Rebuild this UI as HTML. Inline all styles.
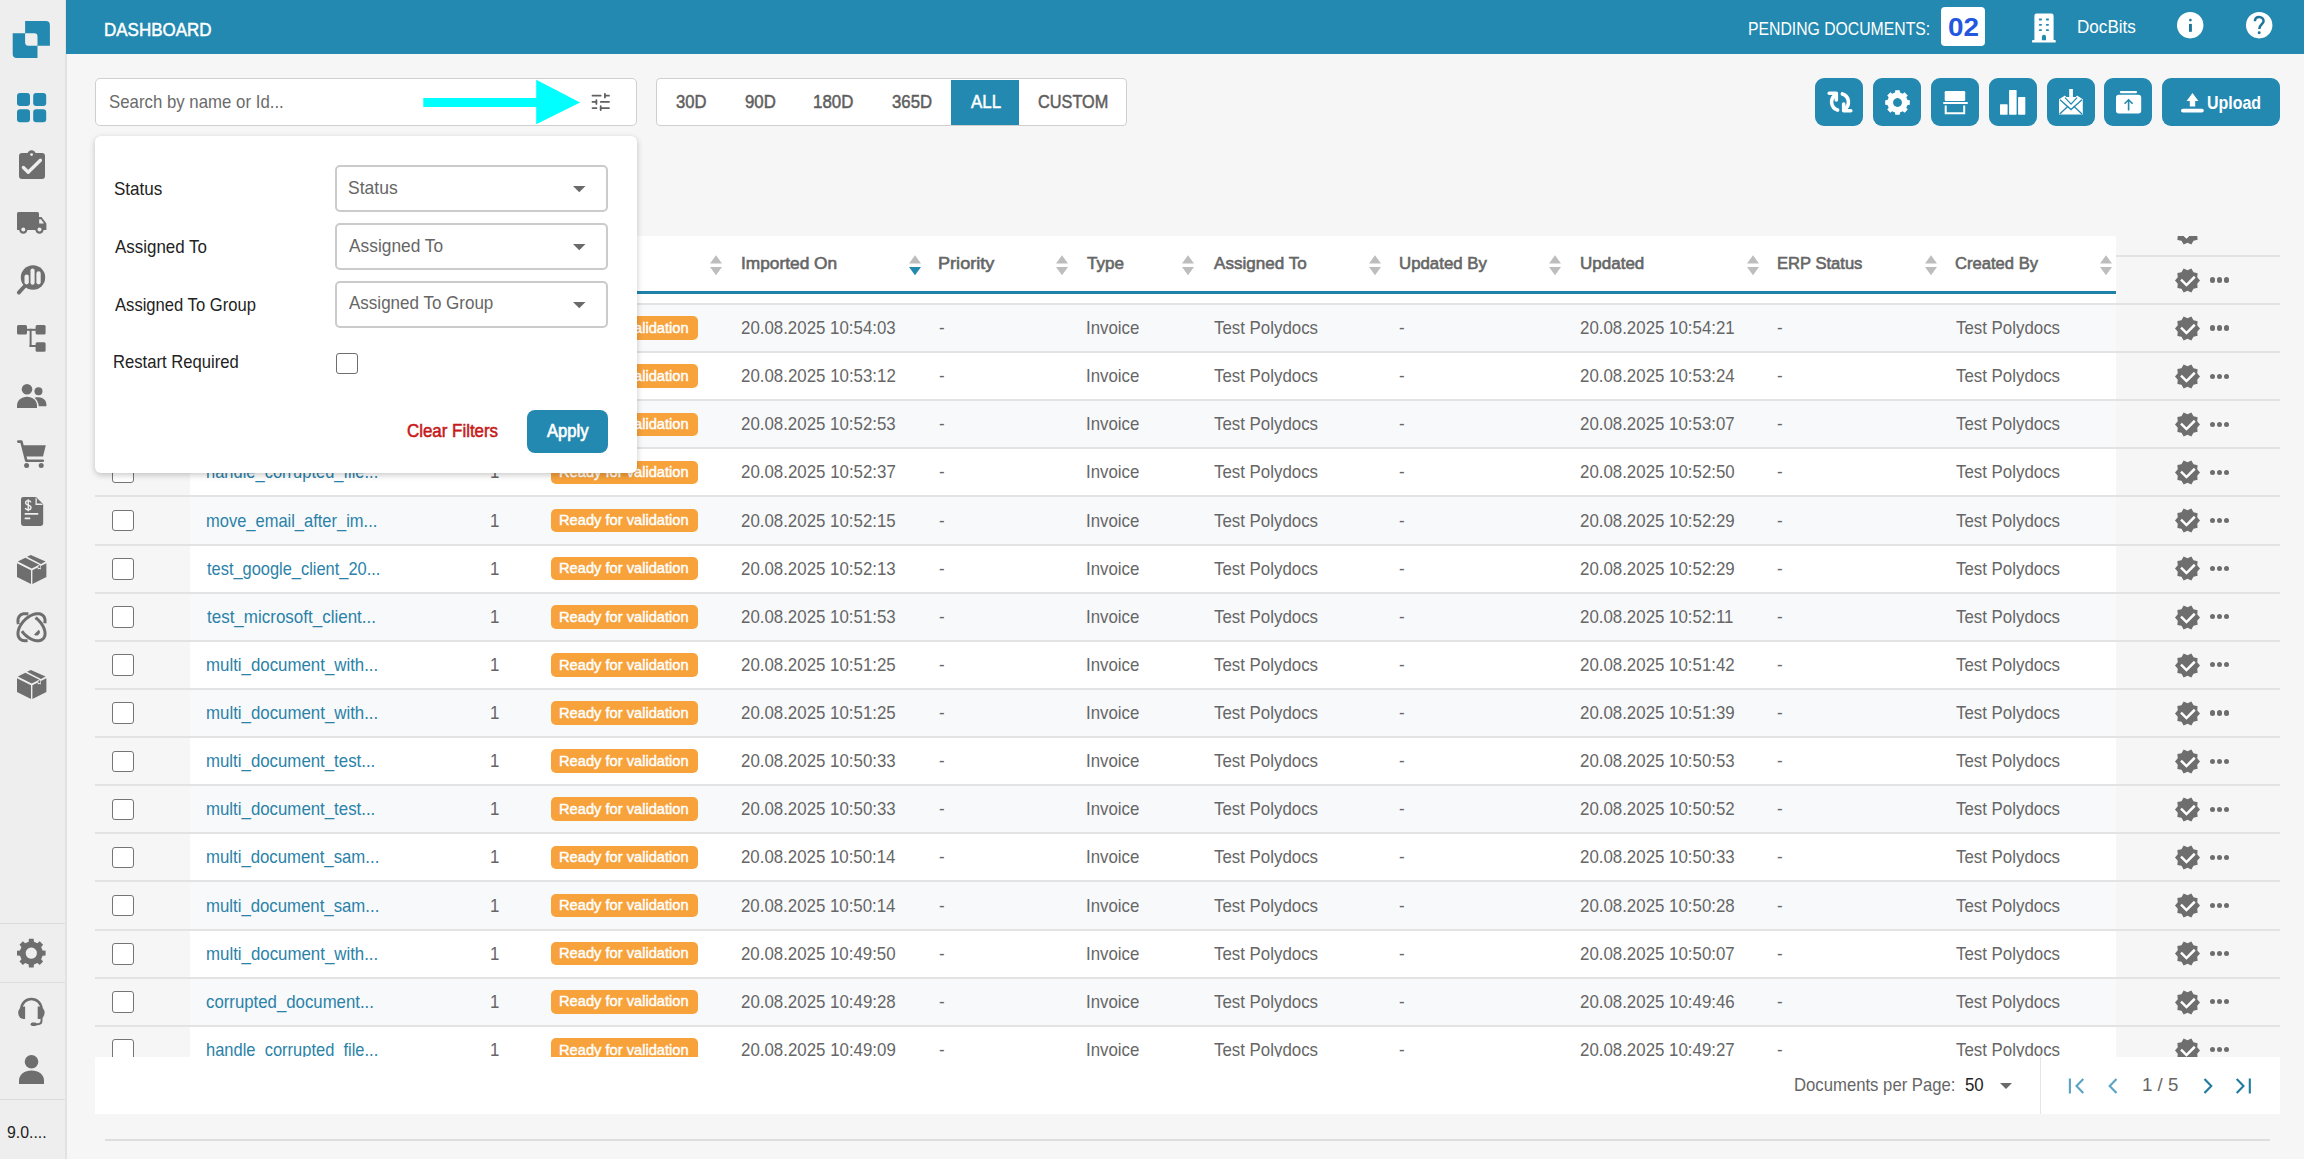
<!DOCTYPE html><html><head><meta charset="utf-8"><style>
*{margin:0;padding:0;box-sizing:border-box}
html,body{width:2304px;height:1159px;overflow:hidden;background:#f6f6f6;font-family:"Liberation Sans",sans-serif}
.a{position:absolute}
.t{position:absolute;white-space:nowrap;line-height:1;transform-origin:0 0}
svg{position:absolute;overflow:visible}
</style></head><body>
<div class="a" style="left:0;top:0;width:2304px;height:1159px;overflow:hidden;clip-path:inset(236px 0 102px 0)">
<div class="a" style="left:190.00px;top:207.76px;width:1926.00px;height:48.12px;background:#f8f9fb;"></div>
<div class="a" style="left:95.00px;top:207.76px;width:95.00px;height:48.12px;background:#f6f6f6;"></div>
<div class="a" style="left:2116.00px;top:207.76px;width:164.00px;height:48.12px;background:#f6f6f6;"></div>
<div class="a" style="left:190.00px;top:255.88px;width:1926.00px;height:48.12px;background:#ffffff;"></div>
<div class="a" style="left:95.00px;top:255.88px;width:95.00px;height:48.12px;background:#f6f6f6;"></div>
<div class="a" style="left:2116.00px;top:255.88px;width:164.00px;height:48.12px;background:#f6f6f6;"></div>
<div class="a" style="left:190.00px;top:304.00px;width:1926.00px;height:48.12px;background:#f8f9fb;"></div>
<div class="a" style="left:95.00px;top:304.00px;width:95.00px;height:48.12px;background:#f6f6f6;"></div>
<div class="a" style="left:2116.00px;top:304.00px;width:164.00px;height:48.12px;background:#f6f6f6;"></div>
<div class="a" style="left:190.00px;top:352.12px;width:1926.00px;height:48.12px;background:#ffffff;"></div>
<div class="a" style="left:95.00px;top:352.12px;width:95.00px;height:48.12px;background:#f6f6f6;"></div>
<div class="a" style="left:2116.00px;top:352.12px;width:164.00px;height:48.12px;background:#f6f6f6;"></div>
<div class="a" style="left:190.00px;top:400.24px;width:1926.00px;height:48.12px;background:#f8f9fb;"></div>
<div class="a" style="left:95.00px;top:400.24px;width:95.00px;height:48.12px;background:#f6f6f6;"></div>
<div class="a" style="left:2116.00px;top:400.24px;width:164.00px;height:48.12px;background:#f6f6f6;"></div>
<div class="a" style="left:190.00px;top:448.36px;width:1926.00px;height:48.12px;background:#ffffff;"></div>
<div class="a" style="left:95.00px;top:448.36px;width:95.00px;height:48.12px;background:#f6f6f6;"></div>
<div class="a" style="left:2116.00px;top:448.36px;width:164.00px;height:48.12px;background:#f6f6f6;"></div>
<div class="a" style="left:190.00px;top:496.48px;width:1926.00px;height:48.12px;background:#f8f9fb;"></div>
<div class="a" style="left:95.00px;top:496.48px;width:95.00px;height:48.12px;background:#f6f6f6;"></div>
<div class="a" style="left:2116.00px;top:496.48px;width:164.00px;height:48.12px;background:#f6f6f6;"></div>
<div class="a" style="left:190.00px;top:544.60px;width:1926.00px;height:48.12px;background:#ffffff;"></div>
<div class="a" style="left:95.00px;top:544.60px;width:95.00px;height:48.12px;background:#f6f6f6;"></div>
<div class="a" style="left:2116.00px;top:544.60px;width:164.00px;height:48.12px;background:#f6f6f6;"></div>
<div class="a" style="left:190.00px;top:592.72px;width:1926.00px;height:48.12px;background:#f8f9fb;"></div>
<div class="a" style="left:95.00px;top:592.72px;width:95.00px;height:48.12px;background:#f6f6f6;"></div>
<div class="a" style="left:2116.00px;top:592.72px;width:164.00px;height:48.12px;background:#f6f6f6;"></div>
<div class="a" style="left:190.00px;top:640.84px;width:1926.00px;height:48.12px;background:#ffffff;"></div>
<div class="a" style="left:95.00px;top:640.84px;width:95.00px;height:48.12px;background:#f6f6f6;"></div>
<div class="a" style="left:2116.00px;top:640.84px;width:164.00px;height:48.12px;background:#f6f6f6;"></div>
<div class="a" style="left:190.00px;top:688.96px;width:1926.00px;height:48.12px;background:#f8f9fb;"></div>
<div class="a" style="left:95.00px;top:688.96px;width:95.00px;height:48.12px;background:#f6f6f6;"></div>
<div class="a" style="left:2116.00px;top:688.96px;width:164.00px;height:48.12px;background:#f6f6f6;"></div>
<div class="a" style="left:190.00px;top:737.08px;width:1926.00px;height:48.12px;background:#ffffff;"></div>
<div class="a" style="left:95.00px;top:737.08px;width:95.00px;height:48.12px;background:#f6f6f6;"></div>
<div class="a" style="left:2116.00px;top:737.08px;width:164.00px;height:48.12px;background:#f6f6f6;"></div>
<div class="a" style="left:190.00px;top:785.20px;width:1926.00px;height:48.12px;background:#f8f9fb;"></div>
<div class="a" style="left:95.00px;top:785.20px;width:95.00px;height:48.12px;background:#f6f6f6;"></div>
<div class="a" style="left:2116.00px;top:785.20px;width:164.00px;height:48.12px;background:#f6f6f6;"></div>
<div class="a" style="left:190.00px;top:833.32px;width:1926.00px;height:48.12px;background:#ffffff;"></div>
<div class="a" style="left:95.00px;top:833.32px;width:95.00px;height:48.12px;background:#f6f6f6;"></div>
<div class="a" style="left:2116.00px;top:833.32px;width:164.00px;height:48.12px;background:#f6f6f6;"></div>
<div class="a" style="left:190.00px;top:881.44px;width:1926.00px;height:48.12px;background:#f8f9fb;"></div>
<div class="a" style="left:95.00px;top:881.44px;width:95.00px;height:48.12px;background:#f6f6f6;"></div>
<div class="a" style="left:2116.00px;top:881.44px;width:164.00px;height:48.12px;background:#f6f6f6;"></div>
<div class="a" style="left:190.00px;top:929.56px;width:1926.00px;height:48.12px;background:#ffffff;"></div>
<div class="a" style="left:95.00px;top:929.56px;width:95.00px;height:48.12px;background:#f6f6f6;"></div>
<div class="a" style="left:2116.00px;top:929.56px;width:164.00px;height:48.12px;background:#f6f6f6;"></div>
<div class="a" style="left:190.00px;top:977.68px;width:1926.00px;height:48.12px;background:#f8f9fb;"></div>
<div class="a" style="left:95.00px;top:977.68px;width:95.00px;height:48.12px;background:#f6f6f6;"></div>
<div class="a" style="left:2116.00px;top:977.68px;width:164.00px;height:48.12px;background:#f6f6f6;"></div>
<div class="a" style="left:190.00px;top:1025.80px;width:1926.00px;height:48.12px;background:#ffffff;"></div>
<div class="a" style="left:95.00px;top:1025.80px;width:95.00px;height:48.12px;background:#f6f6f6;"></div>
<div class="a" style="left:2116.00px;top:1025.80px;width:164.00px;height:48.12px;background:#f6f6f6;"></div>
<div class="a" style="left:95.00px;top:255.00px;width:2185.00px;height:2.00px;background:#e3e3e3;"></div>
<div class="a" style="left:95.00px;top:303.00px;width:2185.00px;height:2.00px;background:#e3e3e3;"></div>
<div class="a" style="left:95.00px;top:351.00px;width:2185.00px;height:2.00px;background:#e3e3e3;"></div>
<div class="a" style="left:95.00px;top:399.00px;width:2185.00px;height:2.00px;background:#e3e3e3;"></div>
<div class="a" style="left:95.00px;top:447.00px;width:2185.00px;height:2.00px;background:#e3e3e3;"></div>
<div class="a" style="left:95.00px;top:495.00px;width:2185.00px;height:2.00px;background:#e3e3e3;"></div>
<div class="a" style="left:95.00px;top:544.00px;width:2185.00px;height:2.00px;background:#e3e3e3;"></div>
<div class="a" style="left:95.00px;top:592.00px;width:2185.00px;height:2.00px;background:#e3e3e3;"></div>
<div class="a" style="left:95.00px;top:640.00px;width:2185.00px;height:2.00px;background:#e3e3e3;"></div>
<div class="a" style="left:95.00px;top:688.00px;width:2185.00px;height:2.00px;background:#e3e3e3;"></div>
<div class="a" style="left:95.00px;top:736.00px;width:2185.00px;height:2.00px;background:#e3e3e3;"></div>
<div class="a" style="left:95.00px;top:784.00px;width:2185.00px;height:2.00px;background:#e3e3e3;"></div>
<div class="a" style="left:95.00px;top:832.00px;width:2185.00px;height:2.00px;background:#e3e3e3;"></div>
<div class="a" style="left:95.00px;top:880.00px;width:2185.00px;height:2.00px;background:#e3e3e3;"></div>
<div class="a" style="left:95.00px;top:929.00px;width:2185.00px;height:2.00px;background:#e3e3e3;"></div>
<div class="a" style="left:95.00px;top:977.00px;width:2185.00px;height:2.00px;background:#e3e3e3;"></div>
<div class="a" style="left:95.00px;top:1025.00px;width:2185.00px;height:2.00px;background:#e3e3e3;"></div>
<div class="a" style="left:95.00px;top:1073.00px;width:2185.00px;height:2.00px;background:#e3e3e3;"></div>
<div class="a" style="left:112px;top:317.46px;width:22px;height:21.5px;border:1.6px solid #757575;border-radius:3px;background:#fff"></div>
<div class="t" style="left:205.84px;top:320.07px;font-size:17.7px;color:#2a82a8;transform:scaleX(0.9319);">handle_corrupted_file...</div>
<div class="t" style="left:489.99px;top:320.07px;font-size:17.7px;color:#666;transform:scaleX(0.9532);">1</div>
<div class="a" style="left:550.6px;top:316.26px;width:147px;height:23.6px;background:#f7a23b;border-radius:5px"></div>
<div class="t" style="left:559.07px;top:320.79px;font-size:14.6px;color:#ffffff;-webkit-text-stroke:0.45px #ffffff;transform:scaleX(1.0051);">Ready for validation</div>
<div class="t" style="left:740.87px;top:320.07px;font-size:17.7px;color:#666;transform:scaleX(0.9532);">20.08.2025 10:54:03</div>
<div class="t" style="left:939.29px;top:320.07px;font-size:17.7px;color:#666;transform:scaleX(0.9532);">-</div>
<div class="t" style="left:1085.75px;top:320.07px;font-size:17.7px;color:#666;transform:scaleX(0.9532);">Invoice</div>
<div class="t" style="left:1213.54px;top:320.07px;font-size:17.7px;color:#666;transform:scaleX(0.9532);">Test Polydocs</div>
<div class="t" style="left:1399.29px;top:320.07px;font-size:17.7px;color:#666;transform:scaleX(0.9532);">-</div>
<div class="t" style="left:1580.17px;top:320.07px;font-size:17.7px;color:#666;transform:scaleX(0.9532);">20.08.2025 10:54:21</div>
<div class="t" style="left:1777.29px;top:320.07px;font-size:17.7px;color:#666;transform:scaleX(0.9532);">-</div>
<div class="t" style="left:1955.64px;top:320.07px;font-size:17.7px;color:#666;transform:scaleX(0.9532);">Test Polydocs</div>
<div class="a" style="left:112px;top:365.58px;width:22px;height:21.5px;border:1.6px solid #757575;border-radius:3px;background:#fff"></div>
<div class="t" style="left:205.93px;top:368.19px;font-size:17.7px;color:#2a82a8;transform:scaleX(0.9521);">multi_document_with...</div>
<div class="t" style="left:489.99px;top:368.19px;font-size:17.7px;color:#666;transform:scaleX(0.9532);">1</div>
<div class="a" style="left:550.6px;top:364.38px;width:147px;height:23.6px;background:#f7a23b;border-radius:5px"></div>
<div class="t" style="left:559.07px;top:368.91px;font-size:14.6px;color:#ffffff;-webkit-text-stroke:0.45px #ffffff;transform:scaleX(1.0051);">Ready for validation</div>
<div class="t" style="left:740.87px;top:368.19px;font-size:17.7px;color:#666;transform:scaleX(0.9539);">20.08.2025 10:53:12</div>
<div class="t" style="left:939.29px;top:368.19px;font-size:17.7px;color:#666;transform:scaleX(0.9532);">-</div>
<div class="t" style="left:1085.75px;top:368.19px;font-size:17.7px;color:#666;transform:scaleX(0.9532);">Invoice</div>
<div class="t" style="left:1213.54px;top:368.19px;font-size:17.7px;color:#666;transform:scaleX(0.9532);">Test Polydocs</div>
<div class="t" style="left:1399.29px;top:368.19px;font-size:17.7px;color:#666;transform:scaleX(0.9532);">-</div>
<div class="t" style="left:1580.17px;top:368.19px;font-size:17.7px;color:#666;transform:scaleX(0.9532);">20.08.2025 10:53:24</div>
<div class="t" style="left:1777.29px;top:368.19px;font-size:17.7px;color:#666;transform:scaleX(0.9532);">-</div>
<div class="t" style="left:1955.64px;top:368.19px;font-size:17.7px;color:#666;transform:scaleX(0.9532);">Test Polydocs</div>
<div class="a" style="left:112px;top:413.70px;width:22px;height:21.5px;border:1.6px solid #757575;border-radius:3px;background:#fff"></div>
<div class="t" style="left:205.93px;top:416.31px;font-size:17.7px;color:#2a82a8;transform:scaleX(0.9521);">multi_document_with...</div>
<div class="t" style="left:489.99px;top:416.31px;font-size:17.7px;color:#666;transform:scaleX(0.9532);">1</div>
<div class="a" style="left:550.6px;top:412.50px;width:147px;height:23.6px;background:#f7a23b;border-radius:5px"></div>
<div class="t" style="left:559.07px;top:417.03px;font-size:14.6px;color:#ffffff;-webkit-text-stroke:0.45px #ffffff;transform:scaleX(1.0051);">Ready for validation</div>
<div class="t" style="left:740.87px;top:416.31px;font-size:17.7px;color:#666;transform:scaleX(0.9532);">20.08.2025 10:52:53</div>
<div class="t" style="left:939.29px;top:416.31px;font-size:17.7px;color:#666;transform:scaleX(0.9532);">-</div>
<div class="t" style="left:1085.75px;top:416.31px;font-size:17.7px;color:#666;transform:scaleX(0.9532);">Invoice</div>
<div class="t" style="left:1213.54px;top:416.31px;font-size:17.7px;color:#666;transform:scaleX(0.9532);">Test Polydocs</div>
<div class="t" style="left:1399.29px;top:416.31px;font-size:17.7px;color:#666;transform:scaleX(0.9532);">-</div>
<div class="t" style="left:1580.17px;top:416.31px;font-size:17.7px;color:#666;transform:scaleX(0.9532);">20.08.2025 10:53:07</div>
<div class="t" style="left:1777.29px;top:416.31px;font-size:17.7px;color:#666;transform:scaleX(0.9532);">-</div>
<div class="t" style="left:1955.64px;top:416.31px;font-size:17.7px;color:#666;transform:scaleX(0.9532);">Test Polydocs</div>
<div class="a" style="left:112px;top:461.82px;width:22px;height:21.5px;border:1.6px solid #757575;border-radius:3px;background:#fff"></div>
<div class="t" style="left:205.84px;top:464.43px;font-size:17.7px;color:#2a82a8;transform:scaleX(0.9319);">handle_corrupted_file...</div>
<div class="t" style="left:489.99px;top:464.43px;font-size:17.7px;color:#666;transform:scaleX(0.9532);">1</div>
<div class="a" style="left:550.6px;top:460.62px;width:147px;height:23.6px;background:#f7a23b;border-radius:5px"></div>
<div class="t" style="left:559.07px;top:465.15px;font-size:14.6px;color:#ffffff;-webkit-text-stroke:0.45px #ffffff;transform:scaleX(1.0051);">Ready for validation</div>
<div class="t" style="left:740.87px;top:464.43px;font-size:17.7px;color:#666;transform:scaleX(0.9539);">20.08.2025 10:52:37</div>
<div class="t" style="left:939.29px;top:464.43px;font-size:17.7px;color:#666;transform:scaleX(0.9532);">-</div>
<div class="t" style="left:1085.75px;top:464.43px;font-size:17.7px;color:#666;transform:scaleX(0.9532);">Invoice</div>
<div class="t" style="left:1213.54px;top:464.43px;font-size:17.7px;color:#666;transform:scaleX(0.9532);">Test Polydocs</div>
<div class="t" style="left:1399.29px;top:464.43px;font-size:17.7px;color:#666;transform:scaleX(0.9532);">-</div>
<div class="t" style="left:1580.17px;top:464.43px;font-size:17.7px;color:#666;transform:scaleX(0.9532);">20.08.2025 10:52:50</div>
<div class="t" style="left:1777.29px;top:464.43px;font-size:17.7px;color:#666;transform:scaleX(0.9532);">-</div>
<div class="t" style="left:1955.64px;top:464.43px;font-size:17.7px;color:#666;transform:scaleX(0.9532);">Test Polydocs</div>
<div class="a" style="left:112px;top:509.94px;width:22px;height:21.5px;border:1.6px solid #757575;border-radius:3px;background:#fff"></div>
<div class="t" style="left:205.95px;top:512.55px;font-size:17.7px;color:#2a82a8;transform:scaleX(0.9320);">move_email_after_im...</div>
<div class="t" style="left:489.99px;top:512.55px;font-size:17.7px;color:#666;transform:scaleX(0.9532);">1</div>
<div class="a" style="left:550.6px;top:508.74px;width:147px;height:23.6px;background:#f7a23b;border-radius:5px"></div>
<div class="t" style="left:559.07px;top:513.27px;font-size:14.6px;color:#ffffff;-webkit-text-stroke:0.45px #ffffff;transform:scaleX(1.0051);">Ready for validation</div>
<div class="t" style="left:740.87px;top:512.55px;font-size:17.7px;color:#666;transform:scaleX(0.9532);">20.08.2025 10:52:15</div>
<div class="t" style="left:939.29px;top:512.55px;font-size:17.7px;color:#666;transform:scaleX(0.9532);">-</div>
<div class="t" style="left:1085.75px;top:512.55px;font-size:17.7px;color:#666;transform:scaleX(0.9532);">Invoice</div>
<div class="t" style="left:1213.54px;top:512.55px;font-size:17.7px;color:#666;transform:scaleX(0.9532);">Test Polydocs</div>
<div class="t" style="left:1399.29px;top:512.55px;font-size:17.7px;color:#666;transform:scaleX(0.9532);">-</div>
<div class="t" style="left:1580.17px;top:512.55px;font-size:17.7px;color:#666;transform:scaleX(0.9532);">20.08.2025 10:52:29</div>
<div class="t" style="left:1777.29px;top:512.55px;font-size:17.7px;color:#666;transform:scaleX(0.9532);">-</div>
<div class="t" style="left:1955.64px;top:512.55px;font-size:17.7px;color:#666;transform:scaleX(0.9532);">Test Polydocs</div>
<div class="a" style="left:112px;top:558.06px;width:22px;height:21.5px;border:1.6px solid #757575;border-radius:3px;background:#fff"></div>
<div class="t" style="left:206.77px;top:560.67px;font-size:17.7px;color:#2a82a8;transform:scaleX(0.9276);">test_google_client_20...</div>
<div class="t" style="left:489.99px;top:560.67px;font-size:17.7px;color:#666;transform:scaleX(0.9532);">1</div>
<div class="a" style="left:550.6px;top:556.86px;width:147px;height:23.6px;background:#f7a23b;border-radius:5px"></div>
<div class="t" style="left:559.07px;top:561.39px;font-size:14.6px;color:#ffffff;-webkit-text-stroke:0.45px #ffffff;transform:scaleX(1.0051);">Ready for validation</div>
<div class="t" style="left:740.87px;top:560.67px;font-size:17.7px;color:#666;transform:scaleX(0.9532);">20.08.2025 10:52:13</div>
<div class="t" style="left:939.29px;top:560.67px;font-size:17.7px;color:#666;transform:scaleX(0.9532);">-</div>
<div class="t" style="left:1085.75px;top:560.67px;font-size:17.7px;color:#666;transform:scaleX(0.9532);">Invoice</div>
<div class="t" style="left:1213.54px;top:560.67px;font-size:17.7px;color:#666;transform:scaleX(0.9532);">Test Polydocs</div>
<div class="t" style="left:1399.29px;top:560.67px;font-size:17.7px;color:#666;transform:scaleX(0.9532);">-</div>
<div class="t" style="left:1580.17px;top:560.67px;font-size:17.7px;color:#666;transform:scaleX(0.9532);">20.08.2025 10:52:29</div>
<div class="t" style="left:1777.29px;top:560.67px;font-size:17.7px;color:#666;transform:scaleX(0.9532);">-</div>
<div class="t" style="left:1955.64px;top:560.67px;font-size:17.7px;color:#666;transform:scaleX(0.9532);">Test Polydocs</div>
<div class="a" style="left:112px;top:606.18px;width:22px;height:21.5px;border:1.6px solid #757575;border-radius:3px;background:#fff"></div>
<div class="t" style="left:206.76px;top:608.79px;font-size:17.7px;color:#2a82a8;transform:scaleX(0.9602);">test_microsoft_client...</div>
<div class="t" style="left:489.99px;top:608.79px;font-size:17.7px;color:#666;transform:scaleX(0.9532);">1</div>
<div class="a" style="left:550.6px;top:604.98px;width:147px;height:23.6px;background:#f7a23b;border-radius:5px"></div>
<div class="t" style="left:559.07px;top:609.51px;font-size:14.6px;color:#ffffff;-webkit-text-stroke:0.45px #ffffff;transform:scaleX(1.0051);">Ready for validation</div>
<div class="t" style="left:740.87px;top:608.79px;font-size:17.7px;color:#666;transform:scaleX(0.9532);">20.08.2025 10:51:53</div>
<div class="t" style="left:939.29px;top:608.79px;font-size:17.7px;color:#666;transform:scaleX(0.9532);">-</div>
<div class="t" style="left:1085.75px;top:608.79px;font-size:17.7px;color:#666;transform:scaleX(0.9532);">Invoice</div>
<div class="t" style="left:1213.54px;top:608.79px;font-size:17.7px;color:#666;transform:scaleX(0.9532);">Test Polydocs</div>
<div class="t" style="left:1399.29px;top:608.79px;font-size:17.7px;color:#666;transform:scaleX(0.9532);">-</div>
<div class="t" style="left:1580.17px;top:608.79px;font-size:17.7px;color:#666;transform:scaleX(0.9532);">20.08.2025 10:52:11</div>
<div class="t" style="left:1777.29px;top:608.79px;font-size:17.7px;color:#666;transform:scaleX(0.9532);">-</div>
<div class="t" style="left:1955.64px;top:608.79px;font-size:17.7px;color:#666;transform:scaleX(0.9532);">Test Polydocs</div>
<div class="a" style="left:112px;top:654.30px;width:22px;height:21.5px;border:1.6px solid #757575;border-radius:3px;background:#fff"></div>
<div class="t" style="left:205.93px;top:656.91px;font-size:17.7px;color:#2a82a8;transform:scaleX(0.9521);">multi_document_with...</div>
<div class="t" style="left:489.99px;top:656.91px;font-size:17.7px;color:#666;transform:scaleX(0.9532);">1</div>
<div class="a" style="left:550.6px;top:653.10px;width:147px;height:23.6px;background:#f7a23b;border-radius:5px"></div>
<div class="t" style="left:559.07px;top:657.63px;font-size:14.6px;color:#ffffff;-webkit-text-stroke:0.45px #ffffff;transform:scaleX(1.0051);">Ready for validation</div>
<div class="t" style="left:740.87px;top:656.91px;font-size:17.7px;color:#666;transform:scaleX(0.9532);">20.08.2025 10:51:25</div>
<div class="t" style="left:939.29px;top:656.91px;font-size:17.7px;color:#666;transform:scaleX(0.9532);">-</div>
<div class="t" style="left:1085.75px;top:656.91px;font-size:17.7px;color:#666;transform:scaleX(0.9532);">Invoice</div>
<div class="t" style="left:1213.54px;top:656.91px;font-size:17.7px;color:#666;transform:scaleX(0.9532);">Test Polydocs</div>
<div class="t" style="left:1399.29px;top:656.91px;font-size:17.7px;color:#666;transform:scaleX(0.9532);">-</div>
<div class="t" style="left:1580.17px;top:656.91px;font-size:17.7px;color:#666;transform:scaleX(0.9532);">20.08.2025 10:51:42</div>
<div class="t" style="left:1777.29px;top:656.91px;font-size:17.7px;color:#666;transform:scaleX(0.9532);">-</div>
<div class="t" style="left:1955.64px;top:656.91px;font-size:17.7px;color:#666;transform:scaleX(0.9532);">Test Polydocs</div>
<div class="a" style="left:112px;top:702.42px;width:22px;height:21.5px;border:1.6px solid #757575;border-radius:3px;background:#fff"></div>
<div class="t" style="left:205.93px;top:705.03px;font-size:17.7px;color:#2a82a8;transform:scaleX(0.9521);">multi_document_with...</div>
<div class="t" style="left:489.99px;top:705.03px;font-size:17.7px;color:#666;transform:scaleX(0.9532);">1</div>
<div class="a" style="left:550.6px;top:701.22px;width:147px;height:23.6px;background:#f7a23b;border-radius:5px"></div>
<div class="t" style="left:559.07px;top:705.75px;font-size:14.6px;color:#ffffff;-webkit-text-stroke:0.45px #ffffff;transform:scaleX(1.0051);">Ready for validation</div>
<div class="t" style="left:740.87px;top:705.03px;font-size:17.7px;color:#666;transform:scaleX(0.9532);">20.08.2025 10:51:25</div>
<div class="t" style="left:939.29px;top:705.03px;font-size:17.7px;color:#666;transform:scaleX(0.9532);">-</div>
<div class="t" style="left:1085.75px;top:705.03px;font-size:17.7px;color:#666;transform:scaleX(0.9532);">Invoice</div>
<div class="t" style="left:1213.54px;top:705.03px;font-size:17.7px;color:#666;transform:scaleX(0.9532);">Test Polydocs</div>
<div class="t" style="left:1399.29px;top:705.03px;font-size:17.7px;color:#666;transform:scaleX(0.9532);">-</div>
<div class="t" style="left:1580.17px;top:705.03px;font-size:17.7px;color:#666;transform:scaleX(0.9532);">20.08.2025 10:51:39</div>
<div class="t" style="left:1777.29px;top:705.03px;font-size:17.7px;color:#666;transform:scaleX(0.9532);">-</div>
<div class="t" style="left:1955.64px;top:705.03px;font-size:17.7px;color:#666;transform:scaleX(0.9532);">Test Polydocs</div>
<div class="a" style="left:112px;top:750.54px;width:22px;height:21.5px;border:1.6px solid #757575;border-radius:3px;background:#fff"></div>
<div class="t" style="left:205.93px;top:753.15px;font-size:17.7px;color:#2a82a8;transform:scaleX(0.9512);">multi_document_test...</div>
<div class="t" style="left:489.99px;top:753.15px;font-size:17.7px;color:#666;transform:scaleX(0.9532);">1</div>
<div class="a" style="left:550.6px;top:749.34px;width:147px;height:23.6px;background:#f7a23b;border-radius:5px"></div>
<div class="t" style="left:559.07px;top:753.87px;font-size:14.6px;color:#ffffff;-webkit-text-stroke:0.45px #ffffff;transform:scaleX(1.0051);">Ready for validation</div>
<div class="t" style="left:740.87px;top:753.15px;font-size:17.7px;color:#666;transform:scaleX(0.9532);">20.08.2025 10:50:33</div>
<div class="t" style="left:939.29px;top:753.15px;font-size:17.7px;color:#666;transform:scaleX(0.9532);">-</div>
<div class="t" style="left:1085.75px;top:753.15px;font-size:17.7px;color:#666;transform:scaleX(0.9532);">Invoice</div>
<div class="t" style="left:1213.54px;top:753.15px;font-size:17.7px;color:#666;transform:scaleX(0.9532);">Test Polydocs</div>
<div class="t" style="left:1399.29px;top:753.15px;font-size:17.7px;color:#666;transform:scaleX(0.9532);">-</div>
<div class="t" style="left:1580.17px;top:753.15px;font-size:17.7px;color:#666;transform:scaleX(0.9532);">20.08.2025 10:50:53</div>
<div class="t" style="left:1777.29px;top:753.15px;font-size:17.7px;color:#666;transform:scaleX(0.9532);">-</div>
<div class="t" style="left:1955.64px;top:753.15px;font-size:17.7px;color:#666;transform:scaleX(0.9532);">Test Polydocs</div>
<div class="a" style="left:112px;top:798.66px;width:22px;height:21.5px;border:1.6px solid #757575;border-radius:3px;background:#fff"></div>
<div class="t" style="left:205.93px;top:801.27px;font-size:17.7px;color:#2a82a8;transform:scaleX(0.9512);">multi_document_test...</div>
<div class="t" style="left:489.99px;top:801.27px;font-size:17.7px;color:#666;transform:scaleX(0.9532);">1</div>
<div class="a" style="left:550.6px;top:797.46px;width:147px;height:23.6px;background:#f7a23b;border-radius:5px"></div>
<div class="t" style="left:559.07px;top:801.99px;font-size:14.6px;color:#ffffff;-webkit-text-stroke:0.45px #ffffff;transform:scaleX(1.0051);">Ready for validation</div>
<div class="t" style="left:740.87px;top:801.27px;font-size:17.7px;color:#666;transform:scaleX(0.9532);">20.08.2025 10:50:33</div>
<div class="t" style="left:939.29px;top:801.27px;font-size:17.7px;color:#666;transform:scaleX(0.9532);">-</div>
<div class="t" style="left:1085.75px;top:801.27px;font-size:17.7px;color:#666;transform:scaleX(0.9532);">Invoice</div>
<div class="t" style="left:1213.54px;top:801.27px;font-size:17.7px;color:#666;transform:scaleX(0.9532);">Test Polydocs</div>
<div class="t" style="left:1399.29px;top:801.27px;font-size:17.7px;color:#666;transform:scaleX(0.9532);">-</div>
<div class="t" style="left:1580.17px;top:801.27px;font-size:17.7px;color:#666;transform:scaleX(0.9532);">20.08.2025 10:50:52</div>
<div class="t" style="left:1777.29px;top:801.27px;font-size:17.7px;color:#666;transform:scaleX(0.9532);">-</div>
<div class="t" style="left:1955.64px;top:801.27px;font-size:17.7px;color:#666;transform:scaleX(0.9532);">Test Polydocs</div>
<div class="a" style="left:112px;top:846.78px;width:22px;height:21.5px;border:1.6px solid #757575;border-radius:3px;background:#fff"></div>
<div class="t" style="left:205.93px;top:849.39px;font-size:17.7px;color:#2a82a8;transform:scaleX(0.9477);">multi_document_sam...</div>
<div class="t" style="left:489.99px;top:849.39px;font-size:17.7px;color:#666;transform:scaleX(0.9532);">1</div>
<div class="a" style="left:550.6px;top:845.58px;width:147px;height:23.6px;background:#f7a23b;border-radius:5px"></div>
<div class="t" style="left:559.07px;top:850.11px;font-size:14.6px;color:#ffffff;-webkit-text-stroke:0.45px #ffffff;transform:scaleX(1.0051);">Ready for validation</div>
<div class="t" style="left:740.87px;top:849.39px;font-size:17.7px;color:#666;transform:scaleX(0.9517);">20.08.2025 10:50:14</div>
<div class="t" style="left:939.29px;top:849.39px;font-size:17.7px;color:#666;transform:scaleX(0.9532);">-</div>
<div class="t" style="left:1085.75px;top:849.39px;font-size:17.7px;color:#666;transform:scaleX(0.9532);">Invoice</div>
<div class="t" style="left:1213.54px;top:849.39px;font-size:17.7px;color:#666;transform:scaleX(0.9532);">Test Polydocs</div>
<div class="t" style="left:1399.29px;top:849.39px;font-size:17.7px;color:#666;transform:scaleX(0.9532);">-</div>
<div class="t" style="left:1580.17px;top:849.39px;font-size:17.7px;color:#666;transform:scaleX(0.9532);">20.08.2025 10:50:33</div>
<div class="t" style="left:1777.29px;top:849.39px;font-size:17.7px;color:#666;transform:scaleX(0.9532);">-</div>
<div class="t" style="left:1955.64px;top:849.39px;font-size:17.7px;color:#666;transform:scaleX(0.9532);">Test Polydocs</div>
<div class="a" style="left:112px;top:894.90px;width:22px;height:21.5px;border:1.6px solid #757575;border-radius:3px;background:#fff"></div>
<div class="t" style="left:205.93px;top:897.51px;font-size:17.7px;color:#2a82a8;transform:scaleX(0.9477);">multi_document_sam...</div>
<div class="t" style="left:489.99px;top:897.51px;font-size:17.7px;color:#666;transform:scaleX(0.9532);">1</div>
<div class="a" style="left:550.6px;top:893.70px;width:147px;height:23.6px;background:#f7a23b;border-radius:5px"></div>
<div class="t" style="left:559.07px;top:898.23px;font-size:14.6px;color:#ffffff;-webkit-text-stroke:0.45px #ffffff;transform:scaleX(1.0051);">Ready for validation</div>
<div class="t" style="left:740.87px;top:897.51px;font-size:17.7px;color:#666;transform:scaleX(0.9517);">20.08.2025 10:50:14</div>
<div class="t" style="left:939.29px;top:897.51px;font-size:17.7px;color:#666;transform:scaleX(0.9532);">-</div>
<div class="t" style="left:1085.75px;top:897.51px;font-size:17.7px;color:#666;transform:scaleX(0.9532);">Invoice</div>
<div class="t" style="left:1213.54px;top:897.51px;font-size:17.7px;color:#666;transform:scaleX(0.9532);">Test Polydocs</div>
<div class="t" style="left:1399.29px;top:897.51px;font-size:17.7px;color:#666;transform:scaleX(0.9532);">-</div>
<div class="t" style="left:1580.17px;top:897.51px;font-size:17.7px;color:#666;transform:scaleX(0.9532);">20.08.2025 10:50:28</div>
<div class="t" style="left:1777.29px;top:897.51px;font-size:17.7px;color:#666;transform:scaleX(0.9532);">-</div>
<div class="t" style="left:1955.64px;top:897.51px;font-size:17.7px;color:#666;transform:scaleX(0.9532);">Test Polydocs</div>
<div class="a" style="left:112px;top:943.02px;width:22px;height:21.5px;border:1.6px solid #757575;border-radius:3px;background:#fff"></div>
<div class="t" style="left:205.93px;top:945.63px;font-size:17.7px;color:#2a82a8;transform:scaleX(0.9521);">multi_document_with...</div>
<div class="t" style="left:489.99px;top:945.63px;font-size:17.7px;color:#666;transform:scaleX(0.9532);">1</div>
<div class="a" style="left:550.6px;top:941.82px;width:147px;height:23.6px;background:#f7a23b;border-radius:5px"></div>
<div class="t" style="left:559.07px;top:946.35px;font-size:14.6px;color:#ffffff;-webkit-text-stroke:0.45px #ffffff;transform:scaleX(1.0051);">Ready for validation</div>
<div class="t" style="left:740.87px;top:945.63px;font-size:17.7px;color:#666;transform:scaleX(0.9524);">20.08.2025 10:49:50</div>
<div class="t" style="left:939.29px;top:945.63px;font-size:17.7px;color:#666;transform:scaleX(0.9532);">-</div>
<div class="t" style="left:1085.75px;top:945.63px;font-size:17.7px;color:#666;transform:scaleX(0.9532);">Invoice</div>
<div class="t" style="left:1213.54px;top:945.63px;font-size:17.7px;color:#666;transform:scaleX(0.9532);">Test Polydocs</div>
<div class="t" style="left:1399.29px;top:945.63px;font-size:17.7px;color:#666;transform:scaleX(0.9532);">-</div>
<div class="t" style="left:1580.17px;top:945.63px;font-size:17.7px;color:#666;transform:scaleX(0.9532);">20.08.2025 10:50:07</div>
<div class="t" style="left:1777.29px;top:945.63px;font-size:17.7px;color:#666;transform:scaleX(0.9532);">-</div>
<div class="t" style="left:1955.64px;top:945.63px;font-size:17.7px;color:#666;transform:scaleX(0.9532);">Test Polydocs</div>
<div class="a" style="left:112px;top:991.14px;width:22px;height:21.5px;border:1.6px solid #757575;border-radius:3px;background:#fff"></div>
<div class="t" style="left:206.29px;top:993.75px;font-size:17.7px;color:#2a82a8;transform:scaleX(0.9489);">corrupted_document...</div>
<div class="t" style="left:489.99px;top:993.75px;font-size:17.7px;color:#666;transform:scaleX(0.9532);">1</div>
<div class="a" style="left:550.6px;top:989.94px;width:147px;height:23.6px;background:#f7a23b;border-radius:5px"></div>
<div class="t" style="left:559.07px;top:994.47px;font-size:14.6px;color:#ffffff;-webkit-text-stroke:0.45px #ffffff;transform:scaleX(1.0051);">Ready for validation</div>
<div class="t" style="left:740.87px;top:993.75px;font-size:17.7px;color:#666;transform:scaleX(0.9532);">20.08.2025 10:49:28</div>
<div class="t" style="left:939.29px;top:993.75px;font-size:17.7px;color:#666;transform:scaleX(0.9532);">-</div>
<div class="t" style="left:1085.75px;top:993.75px;font-size:17.7px;color:#666;transform:scaleX(0.9532);">Invoice</div>
<div class="t" style="left:1213.54px;top:993.75px;font-size:17.7px;color:#666;transform:scaleX(0.9532);">Test Polydocs</div>
<div class="t" style="left:1399.29px;top:993.75px;font-size:17.7px;color:#666;transform:scaleX(0.9532);">-</div>
<div class="t" style="left:1580.17px;top:993.75px;font-size:17.7px;color:#666;transform:scaleX(0.9532);">20.08.2025 10:49:46</div>
<div class="t" style="left:1777.29px;top:993.75px;font-size:17.7px;color:#666;transform:scaleX(0.9532);">-</div>
<div class="t" style="left:1955.64px;top:993.75px;font-size:17.7px;color:#666;transform:scaleX(0.9532);">Test Polydocs</div>
<div class="a" style="left:112px;top:1039.26px;width:22px;height:21.5px;border:1.6px solid #757575;border-radius:3px;background:#fff"></div>
<div class="t" style="left:205.84px;top:1041.87px;font-size:17.7px;color:#2a82a8;transform:scaleX(0.9319);">handle_corrupted_file...</div>
<div class="t" style="left:489.99px;top:1041.87px;font-size:17.7px;color:#666;transform:scaleX(0.9532);">1</div>
<div class="a" style="left:550.6px;top:1038.06px;width:147px;height:23.6px;background:#f7a23b;border-radius:5px"></div>
<div class="t" style="left:559.07px;top:1042.59px;font-size:14.6px;color:#ffffff;-webkit-text-stroke:0.45px #ffffff;transform:scaleX(1.0051);">Ready for validation</div>
<div class="t" style="left:740.87px;top:1041.87px;font-size:17.7px;color:#666;transform:scaleX(0.9539);">20.08.2025 10:49:09</div>
<div class="t" style="left:939.29px;top:1041.87px;font-size:17.7px;color:#666;transform:scaleX(0.9532);">-</div>
<div class="t" style="left:1085.75px;top:1041.87px;font-size:17.7px;color:#666;transform:scaleX(0.9532);">Invoice</div>
<div class="t" style="left:1213.54px;top:1041.87px;font-size:17.7px;color:#666;transform:scaleX(0.9532);">Test Polydocs</div>
<div class="t" style="left:1399.29px;top:1041.87px;font-size:17.7px;color:#666;transform:scaleX(0.9532);">-</div>
<div class="t" style="left:1580.17px;top:1041.87px;font-size:17.7px;color:#666;transform:scaleX(0.9532);">20.08.2025 10:49:27</div>
<div class="t" style="left:1777.29px;top:1041.87px;font-size:17.7px;color:#666;transform:scaleX(0.9532);">-</div>
<div class="t" style="left:1955.64px;top:1041.87px;font-size:17.7px;color:#666;transform:scaleX(0.9532);">Test Polydocs</div>
<svg style="left:2174.8px;top:219.62px" width="25" height="25" viewBox="1 1.5 22 21"><path fill="#6e6e6e" d="M23 12l-2.44-2.79.34-3.69-3.61-.82-1.89-3.2L12 2.96 8.6 1.5 6.71 4.69 3.1 5.5l.34 3.7L1 12l2.44 2.79-.34 3.7 3.61.82L8.6 22.5l3.4-1.47 3.4 1.46 1.89-3.19 3.61-.82-.34-3.69L23 12z"/><path fill="none" stroke="#fff" stroke-width="2.2" d="M6.3 11.3L11.1 16L18.4 8.7"/></svg>
<div class="a" style="left:2209.80px;top:229.22px;width:5.2px;height:5.2px;border-radius:50%;background:#6e6e6e"></div>
<div class="a" style="left:2217.00px;top:229.22px;width:5.2px;height:5.2px;border-radius:50%;background:#6e6e6e"></div>
<div class="a" style="left:2224.20px;top:229.22px;width:5.2px;height:5.2px;border-radius:50%;background:#6e6e6e"></div>
<svg style="left:2174.8px;top:267.74px" width="25" height="25" viewBox="1 1.5 22 21"><path fill="#6e6e6e" d="M23 12l-2.44-2.79.34-3.69-3.61-.82-1.89-3.2L12 2.96 8.6 1.5 6.71 4.69 3.1 5.5l.34 3.7L1 12l2.44 2.79-.34 3.7 3.61.82L8.6 22.5l3.4-1.47 3.4 1.46 1.89-3.19 3.61-.82-.34-3.69L23 12z"/><path fill="none" stroke="#fff" stroke-width="2.2" d="M6.3 11.3L11.1 16L18.4 8.7"/></svg>
<div class="a" style="left:2209.80px;top:277.34px;width:5.2px;height:5.2px;border-radius:50%;background:#6e6e6e"></div>
<div class="a" style="left:2217.00px;top:277.34px;width:5.2px;height:5.2px;border-radius:50%;background:#6e6e6e"></div>
<div class="a" style="left:2224.20px;top:277.34px;width:5.2px;height:5.2px;border-radius:50%;background:#6e6e6e"></div>
<svg style="left:2174.8px;top:315.86px" width="25" height="25" viewBox="1 1.5 22 21"><path fill="#6e6e6e" d="M23 12l-2.44-2.79.34-3.69-3.61-.82-1.89-3.2L12 2.96 8.6 1.5 6.71 4.69 3.1 5.5l.34 3.7L1 12l2.44 2.79-.34 3.7 3.61.82L8.6 22.5l3.4-1.47 3.4 1.46 1.89-3.19 3.61-.82-.34-3.69L23 12z"/><path fill="none" stroke="#fff" stroke-width="2.2" d="M6.3 11.3L11.1 16L18.4 8.7"/></svg>
<div class="a" style="left:2209.80px;top:325.46px;width:5.2px;height:5.2px;border-radius:50%;background:#6e6e6e"></div>
<div class="a" style="left:2217.00px;top:325.46px;width:5.2px;height:5.2px;border-radius:50%;background:#6e6e6e"></div>
<div class="a" style="left:2224.20px;top:325.46px;width:5.2px;height:5.2px;border-radius:50%;background:#6e6e6e"></div>
<svg style="left:2174.8px;top:363.98px" width="25" height="25" viewBox="1 1.5 22 21"><path fill="#6e6e6e" d="M23 12l-2.44-2.79.34-3.69-3.61-.82-1.89-3.2L12 2.96 8.6 1.5 6.71 4.69 3.1 5.5l.34 3.7L1 12l2.44 2.79-.34 3.7 3.61.82L8.6 22.5l3.4-1.47 3.4 1.46 1.89-3.19 3.61-.82-.34-3.69L23 12z"/><path fill="none" stroke="#fff" stroke-width="2.2" d="M6.3 11.3L11.1 16L18.4 8.7"/></svg>
<div class="a" style="left:2209.80px;top:373.58px;width:5.2px;height:5.2px;border-radius:50%;background:#6e6e6e"></div>
<div class="a" style="left:2217.00px;top:373.58px;width:5.2px;height:5.2px;border-radius:50%;background:#6e6e6e"></div>
<div class="a" style="left:2224.20px;top:373.58px;width:5.2px;height:5.2px;border-radius:50%;background:#6e6e6e"></div>
<svg style="left:2174.8px;top:412.10px" width="25" height="25" viewBox="1 1.5 22 21"><path fill="#6e6e6e" d="M23 12l-2.44-2.79.34-3.69-3.61-.82-1.89-3.2L12 2.96 8.6 1.5 6.71 4.69 3.1 5.5l.34 3.7L1 12l2.44 2.79-.34 3.7 3.61.82L8.6 22.5l3.4-1.47 3.4 1.46 1.89-3.19 3.61-.82-.34-3.69L23 12z"/><path fill="none" stroke="#fff" stroke-width="2.2" d="M6.3 11.3L11.1 16L18.4 8.7"/></svg>
<div class="a" style="left:2209.80px;top:421.70px;width:5.2px;height:5.2px;border-radius:50%;background:#6e6e6e"></div>
<div class="a" style="left:2217.00px;top:421.70px;width:5.2px;height:5.2px;border-radius:50%;background:#6e6e6e"></div>
<div class="a" style="left:2224.20px;top:421.70px;width:5.2px;height:5.2px;border-radius:50%;background:#6e6e6e"></div>
<svg style="left:2174.8px;top:460.22px" width="25" height="25" viewBox="1 1.5 22 21"><path fill="#6e6e6e" d="M23 12l-2.44-2.79.34-3.69-3.61-.82-1.89-3.2L12 2.96 8.6 1.5 6.71 4.69 3.1 5.5l.34 3.7L1 12l2.44 2.79-.34 3.7 3.61.82L8.6 22.5l3.4-1.47 3.4 1.46 1.89-3.19 3.61-.82-.34-3.69L23 12z"/><path fill="none" stroke="#fff" stroke-width="2.2" d="M6.3 11.3L11.1 16L18.4 8.7"/></svg>
<div class="a" style="left:2209.80px;top:469.82px;width:5.2px;height:5.2px;border-radius:50%;background:#6e6e6e"></div>
<div class="a" style="left:2217.00px;top:469.82px;width:5.2px;height:5.2px;border-radius:50%;background:#6e6e6e"></div>
<div class="a" style="left:2224.20px;top:469.82px;width:5.2px;height:5.2px;border-radius:50%;background:#6e6e6e"></div>
<svg style="left:2174.8px;top:508.34px" width="25" height="25" viewBox="1 1.5 22 21"><path fill="#6e6e6e" d="M23 12l-2.44-2.79.34-3.69-3.61-.82-1.89-3.2L12 2.96 8.6 1.5 6.71 4.69 3.1 5.5l.34 3.7L1 12l2.44 2.79-.34 3.7 3.61.82L8.6 22.5l3.4-1.47 3.4 1.46 1.89-3.19 3.61-.82-.34-3.69L23 12z"/><path fill="none" stroke="#fff" stroke-width="2.2" d="M6.3 11.3L11.1 16L18.4 8.7"/></svg>
<div class="a" style="left:2209.80px;top:517.94px;width:5.2px;height:5.2px;border-radius:50%;background:#6e6e6e"></div>
<div class="a" style="left:2217.00px;top:517.94px;width:5.2px;height:5.2px;border-radius:50%;background:#6e6e6e"></div>
<div class="a" style="left:2224.20px;top:517.94px;width:5.2px;height:5.2px;border-radius:50%;background:#6e6e6e"></div>
<svg style="left:2174.8px;top:556.46px" width="25" height="25" viewBox="1 1.5 22 21"><path fill="#6e6e6e" d="M23 12l-2.44-2.79.34-3.69-3.61-.82-1.89-3.2L12 2.96 8.6 1.5 6.71 4.69 3.1 5.5l.34 3.7L1 12l2.44 2.79-.34 3.7 3.61.82L8.6 22.5l3.4-1.47 3.4 1.46 1.89-3.19 3.61-.82-.34-3.69L23 12z"/><path fill="none" stroke="#fff" stroke-width="2.2" d="M6.3 11.3L11.1 16L18.4 8.7"/></svg>
<div class="a" style="left:2209.80px;top:566.06px;width:5.2px;height:5.2px;border-radius:50%;background:#6e6e6e"></div>
<div class="a" style="left:2217.00px;top:566.06px;width:5.2px;height:5.2px;border-radius:50%;background:#6e6e6e"></div>
<div class="a" style="left:2224.20px;top:566.06px;width:5.2px;height:5.2px;border-radius:50%;background:#6e6e6e"></div>
<svg style="left:2174.8px;top:604.58px" width="25" height="25" viewBox="1 1.5 22 21"><path fill="#6e6e6e" d="M23 12l-2.44-2.79.34-3.69-3.61-.82-1.89-3.2L12 2.96 8.6 1.5 6.71 4.69 3.1 5.5l.34 3.7L1 12l2.44 2.79-.34 3.7 3.61.82L8.6 22.5l3.4-1.47 3.4 1.46 1.89-3.19 3.61-.82-.34-3.69L23 12z"/><path fill="none" stroke="#fff" stroke-width="2.2" d="M6.3 11.3L11.1 16L18.4 8.7"/></svg>
<div class="a" style="left:2209.80px;top:614.18px;width:5.2px;height:5.2px;border-radius:50%;background:#6e6e6e"></div>
<div class="a" style="left:2217.00px;top:614.18px;width:5.2px;height:5.2px;border-radius:50%;background:#6e6e6e"></div>
<div class="a" style="left:2224.20px;top:614.18px;width:5.2px;height:5.2px;border-radius:50%;background:#6e6e6e"></div>
<svg style="left:2174.8px;top:652.70px" width="25" height="25" viewBox="1 1.5 22 21"><path fill="#6e6e6e" d="M23 12l-2.44-2.79.34-3.69-3.61-.82-1.89-3.2L12 2.96 8.6 1.5 6.71 4.69 3.1 5.5l.34 3.7L1 12l2.44 2.79-.34 3.7 3.61.82L8.6 22.5l3.4-1.47 3.4 1.46 1.89-3.19 3.61-.82-.34-3.69L23 12z"/><path fill="none" stroke="#fff" stroke-width="2.2" d="M6.3 11.3L11.1 16L18.4 8.7"/></svg>
<div class="a" style="left:2209.80px;top:662.30px;width:5.2px;height:5.2px;border-radius:50%;background:#6e6e6e"></div>
<div class="a" style="left:2217.00px;top:662.30px;width:5.2px;height:5.2px;border-radius:50%;background:#6e6e6e"></div>
<div class="a" style="left:2224.20px;top:662.30px;width:5.2px;height:5.2px;border-radius:50%;background:#6e6e6e"></div>
<svg style="left:2174.8px;top:700.82px" width="25" height="25" viewBox="1 1.5 22 21"><path fill="#6e6e6e" d="M23 12l-2.44-2.79.34-3.69-3.61-.82-1.89-3.2L12 2.96 8.6 1.5 6.71 4.69 3.1 5.5l.34 3.7L1 12l2.44 2.79-.34 3.7 3.61.82L8.6 22.5l3.4-1.47 3.4 1.46 1.89-3.19 3.61-.82-.34-3.69L23 12z"/><path fill="none" stroke="#fff" stroke-width="2.2" d="M6.3 11.3L11.1 16L18.4 8.7"/></svg>
<div class="a" style="left:2209.80px;top:710.42px;width:5.2px;height:5.2px;border-radius:50%;background:#6e6e6e"></div>
<div class="a" style="left:2217.00px;top:710.42px;width:5.2px;height:5.2px;border-radius:50%;background:#6e6e6e"></div>
<div class="a" style="left:2224.20px;top:710.42px;width:5.2px;height:5.2px;border-radius:50%;background:#6e6e6e"></div>
<svg style="left:2174.8px;top:748.94px" width="25" height="25" viewBox="1 1.5 22 21"><path fill="#6e6e6e" d="M23 12l-2.44-2.79.34-3.69-3.61-.82-1.89-3.2L12 2.96 8.6 1.5 6.71 4.69 3.1 5.5l.34 3.7L1 12l2.44 2.79-.34 3.7 3.61.82L8.6 22.5l3.4-1.47 3.4 1.46 1.89-3.19 3.61-.82-.34-3.69L23 12z"/><path fill="none" stroke="#fff" stroke-width="2.2" d="M6.3 11.3L11.1 16L18.4 8.7"/></svg>
<div class="a" style="left:2209.80px;top:758.54px;width:5.2px;height:5.2px;border-radius:50%;background:#6e6e6e"></div>
<div class="a" style="left:2217.00px;top:758.54px;width:5.2px;height:5.2px;border-radius:50%;background:#6e6e6e"></div>
<div class="a" style="left:2224.20px;top:758.54px;width:5.2px;height:5.2px;border-radius:50%;background:#6e6e6e"></div>
<svg style="left:2174.8px;top:797.06px" width="25" height="25" viewBox="1 1.5 22 21"><path fill="#6e6e6e" d="M23 12l-2.44-2.79.34-3.69-3.61-.82-1.89-3.2L12 2.96 8.6 1.5 6.71 4.69 3.1 5.5l.34 3.7L1 12l2.44 2.79-.34 3.7 3.61.82L8.6 22.5l3.4-1.47 3.4 1.46 1.89-3.19 3.61-.82-.34-3.69L23 12z"/><path fill="none" stroke="#fff" stroke-width="2.2" d="M6.3 11.3L11.1 16L18.4 8.7"/></svg>
<div class="a" style="left:2209.80px;top:806.66px;width:5.2px;height:5.2px;border-radius:50%;background:#6e6e6e"></div>
<div class="a" style="left:2217.00px;top:806.66px;width:5.2px;height:5.2px;border-radius:50%;background:#6e6e6e"></div>
<div class="a" style="left:2224.20px;top:806.66px;width:5.2px;height:5.2px;border-radius:50%;background:#6e6e6e"></div>
<svg style="left:2174.8px;top:845.18px" width="25" height="25" viewBox="1 1.5 22 21"><path fill="#6e6e6e" d="M23 12l-2.44-2.79.34-3.69-3.61-.82-1.89-3.2L12 2.96 8.6 1.5 6.71 4.69 3.1 5.5l.34 3.7L1 12l2.44 2.79-.34 3.7 3.61.82L8.6 22.5l3.4-1.47 3.4 1.46 1.89-3.19 3.61-.82-.34-3.69L23 12z"/><path fill="none" stroke="#fff" stroke-width="2.2" d="M6.3 11.3L11.1 16L18.4 8.7"/></svg>
<div class="a" style="left:2209.80px;top:854.78px;width:5.2px;height:5.2px;border-radius:50%;background:#6e6e6e"></div>
<div class="a" style="left:2217.00px;top:854.78px;width:5.2px;height:5.2px;border-radius:50%;background:#6e6e6e"></div>
<div class="a" style="left:2224.20px;top:854.78px;width:5.2px;height:5.2px;border-radius:50%;background:#6e6e6e"></div>
<svg style="left:2174.8px;top:893.30px" width="25" height="25" viewBox="1 1.5 22 21"><path fill="#6e6e6e" d="M23 12l-2.44-2.79.34-3.69-3.61-.82-1.89-3.2L12 2.96 8.6 1.5 6.71 4.69 3.1 5.5l.34 3.7L1 12l2.44 2.79-.34 3.7 3.61.82L8.6 22.5l3.4-1.47 3.4 1.46 1.89-3.19 3.61-.82-.34-3.69L23 12z"/><path fill="none" stroke="#fff" stroke-width="2.2" d="M6.3 11.3L11.1 16L18.4 8.7"/></svg>
<div class="a" style="left:2209.80px;top:902.90px;width:5.2px;height:5.2px;border-radius:50%;background:#6e6e6e"></div>
<div class="a" style="left:2217.00px;top:902.90px;width:5.2px;height:5.2px;border-radius:50%;background:#6e6e6e"></div>
<div class="a" style="left:2224.20px;top:902.90px;width:5.2px;height:5.2px;border-radius:50%;background:#6e6e6e"></div>
<svg style="left:2174.8px;top:941.42px" width="25" height="25" viewBox="1 1.5 22 21"><path fill="#6e6e6e" d="M23 12l-2.44-2.79.34-3.69-3.61-.82-1.89-3.2L12 2.96 8.6 1.5 6.71 4.69 3.1 5.5l.34 3.7L1 12l2.44 2.79-.34 3.7 3.61.82L8.6 22.5l3.4-1.47 3.4 1.46 1.89-3.19 3.61-.82-.34-3.69L23 12z"/><path fill="none" stroke="#fff" stroke-width="2.2" d="M6.3 11.3L11.1 16L18.4 8.7"/></svg>
<div class="a" style="left:2209.80px;top:951.02px;width:5.2px;height:5.2px;border-radius:50%;background:#6e6e6e"></div>
<div class="a" style="left:2217.00px;top:951.02px;width:5.2px;height:5.2px;border-radius:50%;background:#6e6e6e"></div>
<div class="a" style="left:2224.20px;top:951.02px;width:5.2px;height:5.2px;border-radius:50%;background:#6e6e6e"></div>
<svg style="left:2174.8px;top:989.54px" width="25" height="25" viewBox="1 1.5 22 21"><path fill="#6e6e6e" d="M23 12l-2.44-2.79.34-3.69-3.61-.82-1.89-3.2L12 2.96 8.6 1.5 6.71 4.69 3.1 5.5l.34 3.7L1 12l2.44 2.79-.34 3.7 3.61.82L8.6 22.5l3.4-1.47 3.4 1.46 1.89-3.19 3.61-.82-.34-3.69L23 12z"/><path fill="none" stroke="#fff" stroke-width="2.2" d="M6.3 11.3L11.1 16L18.4 8.7"/></svg>
<div class="a" style="left:2209.80px;top:999.14px;width:5.2px;height:5.2px;border-radius:50%;background:#6e6e6e"></div>
<div class="a" style="left:2217.00px;top:999.14px;width:5.2px;height:5.2px;border-radius:50%;background:#6e6e6e"></div>
<div class="a" style="left:2224.20px;top:999.14px;width:5.2px;height:5.2px;border-radius:50%;background:#6e6e6e"></div>
<svg style="left:2174.8px;top:1037.66px" width="25" height="25" viewBox="1 1.5 22 21"><path fill="#6e6e6e" d="M23 12l-2.44-2.79.34-3.69-3.61-.82-1.89-3.2L12 2.96 8.6 1.5 6.71 4.69 3.1 5.5l.34 3.7L1 12l2.44 2.79-.34 3.7 3.61.82L8.6 22.5l3.4-1.47 3.4 1.46 1.89-3.19 3.61-.82-.34-3.69L23 12z"/><path fill="none" stroke="#fff" stroke-width="2.2" d="M6.3 11.3L11.1 16L18.4 8.7"/></svg>
<div class="a" style="left:2209.80px;top:1047.26px;width:5.2px;height:5.2px;border-radius:50%;background:#6e6e6e"></div>
<div class="a" style="left:2217.00px;top:1047.26px;width:5.2px;height:5.2px;border-radius:50%;background:#6e6e6e"></div>
<div class="a" style="left:2224.20px;top:1047.26px;width:5.2px;height:5.2px;border-radius:50%;background:#6e6e6e"></div>
</div>
<div class="a" style="left:95.00px;top:236.00px;width:2021.00px;height:55.00px;background:#ffffff;"></div>
<div class="a" style="left:95.00px;top:291.00px;width:2021.00px;height:2.60px;background:#2082aa;"></div>
<div class="t" style="left:740.87px;top:255.30px;font-size:17.0px;color:#666;-webkit-text-stroke:0.6px #666;transform:scaleX(1.0177);">Imported On</div>
<div class="t" style="left:938.43px;top:255.30px;font-size:17.0px;color:#666;-webkit-text-stroke:0.6px #666;transform:scaleX(1.0660);">Priority</div>
<div class="t" style="left:1086.72px;top:255.30px;font-size:17.0px;color:#666;-webkit-text-stroke:0.6px #666;transform:scaleX(1.0042);">Type</div>
<div class="t" style="left:1214.00px;top:255.30px;font-size:17.0px;color:#666;-webkit-text-stroke:0.6px #666;transform:scaleX(1.0041);">Assigned To</div>
<div class="t" style="left:1398.76px;top:255.30px;font-size:17.0px;color:#666;-webkit-text-stroke:0.6px #666;transform:scaleX(0.9894);">Updated By</div>
<div class="t" style="left:1580.05px;top:255.30px;font-size:17.0px;color:#666;-webkit-text-stroke:0.6px #666;">Updated</div>
<div class="t" style="left:1777.16px;top:255.30px;font-size:17.0px;color:#666;-webkit-text-stroke:0.6px #666;transform:scaleX(0.9752);">ERP Status</div>
<div class="t" style="left:1955.25px;top:255.30px;font-size:17.0px;color:#666;-webkit-text-stroke:0.6px #666;transform:scaleX(0.9759);">Created By</div>
<svg style="left:710.2px;top:255px" width="12" height="21" viewBox="0 0 12 21"><path fill="#bdbdbd" d="M6 0.2L12 8.4H0z"/><path fill="#bdbdbd" d="M0 12H12L6 20.2z"/></svg>
<svg style="left:908.6px;top:255px" width="12" height="21" viewBox="0 0 12 21"><path fill="#bdbdbd" d="M6 0.2L12 8.4H0z"/><path fill="#2389b0" d="M0 12H12L6 20.2z"/></svg>
<svg style="left:1055.7px;top:255px" width="12" height="21" viewBox="0 0 12 21"><path fill="#bdbdbd" d="M6 0.2L12 8.4H0z"/><path fill="#bdbdbd" d="M0 12H12L6 20.2z"/></svg>
<svg style="left:1181.9px;top:255px" width="12" height="21" viewBox="0 0 12 21"><path fill="#bdbdbd" d="M6 0.2L12 8.4H0z"/><path fill="#bdbdbd" d="M0 12H12L6 20.2z"/></svg>
<svg style="left:1368.6px;top:255px" width="12" height="21" viewBox="0 0 12 21"><path fill="#bdbdbd" d="M6 0.2L12 8.4H0z"/><path fill="#bdbdbd" d="M0 12H12L6 20.2z"/></svg>
<svg style="left:1549.2px;top:255px" width="12" height="21" viewBox="0 0 12 21"><path fill="#bdbdbd" d="M6 0.2L12 8.4H0z"/><path fill="#bdbdbd" d="M0 12H12L6 20.2z"/></svg>
<svg style="left:1747.0px;top:255px" width="12" height="21" viewBox="0 0 12 21"><path fill="#bdbdbd" d="M6 0.2L12 8.4H0z"/><path fill="#bdbdbd" d="M0 12H12L6 20.2z"/></svg>
<svg style="left:1924.6px;top:255px" width="12" height="21" viewBox="0 0 12 21"><path fill="#bdbdbd" d="M6 0.2L12 8.4H0z"/><path fill="#bdbdbd" d="M0 12H12L6 20.2z"/></svg>
<svg style="left:2100.1px;top:255px" width="12" height="21" viewBox="0 0 12 21"><path fill="#bdbdbd" d="M6 0.2L12 8.4H0z"/><path fill="#bdbdbd" d="M0 12H12L6 20.2z"/></svg>
<div class="a" style="left:95.00px;top:1057.00px;width:2185.00px;height:57.30px;background:#ffffff;"></div>
<div class="a" style="left:2040.00px;top:1057.00px;width:1.00px;height:57.30px;background:#e6e6e6;"></div>
<div class="a" style="left:105.00px;top:1139.00px;width:2165.00px;height:1.50px;background:#dedede;"></div>
<div class="t" style="left:1793.78px;top:1077.21px;font-size:17.7px;color:#666;transform:scaleX(0.9441);">Documents per Page:</div>
<div class="t" style="left:1964.99px;top:1077.21px;font-size:17.7px;color:#222;transform:scaleX(0.9524);">50</div>
<svg style="left:2000px;top:1083.2px" width="12" height="6" viewBox="0 0 12 6"><path fill="#6a6a6a" d="M0 0H12L6 6z"/></svg>
<div class="t" style="left:2141.65px;top:1077.21px;font-size:17.7px;color:#666;transform:scaleX(1.0564);">1 / 5</div>
<svg style="left:2066px;top:1076px" width="22" height="20" viewBox="0 0 22 20" fill="none" stroke="#5aa3c4" stroke-width="2.1"><path d="M3.9 2.5V17.5"/><path d="M17.3 3L10.5 10L17.3 17"/></svg>
<svg style="left:2104px;top:1076px" width="18" height="20" viewBox="0 0 18 20" fill="none" stroke="#5aa3c4" stroke-width="2.1"><path d="M12.5 3L5.7 10L12.5 17"/></svg>
<svg style="left:2199px;top:1076px" width="18" height="20" viewBox="0 0 18 20" fill="none" stroke="#1f7ba2" stroke-width="2.1"><path d="M5.5 3L12.3 10L5.5 17"/></svg>
<svg style="left:2232px;top:1076px" width="22" height="20" viewBox="0 0 22 20" fill="none" stroke="#1f7ba2" stroke-width="2.1"><path d="M17.8 2.5V17.5"/><path d="M4.7 3L11.5 10L4.7 17"/></svg>
<div class="a" style="left:0.00px;top:0.00px;width:65.00px;height:1159.00px;background:#eeeeee;"></div>
<div class="a" style="left:65.00px;top:0.00px;width:1.50px;height:1159.00px;background:#e2e2e2;"></div>
<svg style="left:0;top:0" width="66" height="66" viewBox="0 0 66 66">
<path fill="#2389b0" d="M25.1 21.1H45.8A4.1 4.1 0 0 1 49.9 25.2V45.7H25.1z"/>
<path fill="#2389b0" d="M12.7 33.3H37.5V58.1H16.8A4.1 4.1 0 0 1 12.7 54z"/>
<path fill="#eeeeee" d="M25.1 33.3H34.4A3.1 3.1 0 0 1 37.5 36.4V45.7H28.2A3.1 3.1 0 0 1 25.1 42.6z"/>
</svg>
<svg style="left:16.8px;top:92.5px" width="29.2" height="29.2" viewBox="0 0 29.2 29.2" fill="#2389b0">
<rect x="0" y="0" width="13" height="13" rx="3"/><rect x="16.2" y="0" width="13" height="13" rx="3"/>
<rect x="0" y="16.2" width="13" height="13" rx="3"/><rect x="16.2" y="16.2" width="13" height="13" rx="3"/></svg>
<svg style="left:18.8px;top:150.4px" width="26" height="29" viewBox="0 0 26 29">
<rect x="0" y="3" width="26" height="26" rx="3" fill="#6e6e6e"/>
<circle cx="12.6" cy="4.4" r="4.2" fill="#6e6e6e"/><circle cx="12.6" cy="4.6" r="1.4" fill="#eee"/>
<path d="M4.4 17.5L9.2 22.2L21.4 10.2" fill="none" stroke="#eee" stroke-width="3.3" stroke-linecap="round" stroke-linejoin="round"/></svg>
<svg style="left:16.8px;top:211.7px" width="29.4" height="22" viewBox="0 0 29.4 22">
<path fill="#6e6e6e" d="M1.5 0H20.5a1.5 1.5 0 0 1 1.5 1.5V5H24.5L29.4 11.5V18H0V1.5A1.5 1.5 0 0 1 1.5 0z"/>
<path fill="#eee" d="M22.2 7.2H24L27 11.4H22.2z"/>
<circle cx="6.3" cy="17.5" r="4.2" fill="#6e6e6e"/><circle cx="6.3" cy="17.5" r="2" fill="#eee"/>
<circle cx="22.5" cy="17.5" r="4.2" fill="#6e6e6e"/><circle cx="22.5" cy="17.5" r="2" fill="#eee"/></svg>
<svg style="left:17.4px;top:265.4px" width="29" height="29" viewBox="0 0 29 29">
<circle cx="16" cy="12.5" r="12.2" fill="#6e6e6e"/>
<rect x="7.5" y="9.4" width="4.3" height="10" rx="2.1" fill="#eee"/><rect x="13.5" y="3.6" width="4.1" height="16.2" rx="2" fill="#eee"/><rect x="19.4" y="6.3" width="4.3" height="13.1" rx="2.1" fill="#eee"/>
<path d="M7.6 21.3L1.8 27.6" stroke="#6e6e6e" stroke-width="3.8" stroke-linecap="round"/></svg>
<svg style="left:16.8px;top:324.8px" width="29" height="27" viewBox="0 0 29 27" fill="#6e6e6e">
<rect x="0" y="0" width="10" height="9.5" rx="1.5"/><rect x="18.6" y="0" width="10" height="9.5" rx="1.5"/><rect x="18.6" y="17.2" width="10" height="9.5" rx="1.5"/>
<rect x="9" y="3.8" width="10" height="2"/><rect x="12.6" y="3.8" width="2" height="18"/><rect x="12.6" y="20" width="7" height="2"/></svg>
<svg style="left:16.6px;top:384.4px" width="29.4" height="24" viewBox="0 0 29.4 24" fill="#6e6e6e">
<circle cx="10" cy="5.3" r="5.3"/><path d="M0 24V21.5C0 16.5 4.5 12.8 10 12.8S20 16.5 20 21.5V24z"/>
<circle cx="21.5" cy="7.3" r="4"/><path d="M17.6 13.8C18.8 13.3 20 13.2 21.5 13.2 25.8 13.2 29.4 16.3 29.4 20.3V22.2H21.8C21.5 19 20 16 17.6 13.8z"/></svg>
<svg style="left:17px;top:439.7px" width="29" height="28" viewBox="0 0 29 28">
<path d="M1.3 1.6H4.4L9.3 20.8H25.8" fill="none" stroke="#6e6e6e" stroke-width="2.6" stroke-linecap="round" stroke-linejoin="round"/>
<path d="M5.3 5.2H28.8L26 16.6H8.2z" fill="#6e6e6e"/>
<circle cx="9.6" cy="25.6" r="2.5" fill="#6e6e6e"/><circle cx="24.2" cy="25.6" r="2.5" fill="#6e6e6e"/></svg>
<svg style="left:20.7px;top:496.6px" width="22.2" height="29" viewBox="0 0 22.2 29">
<path fill="#6e6e6e" d="M2.5 0H15L22.2 7.2V26.5A2.5 2.5 0 0 1 19.7 29H2.5A2.5 2.5 0 0 1 0 26.5V2.5A2.5 2.5 0 0 1 2.5 0z"/>
<path fill="#eee" d="M14.5 0.5V8H22z" opacity="1"/><path fill="#6e6e6e" d="M15.8 1.3V6.6H21z"/>
<path d="M7.25 2.3V14.2M9.9 5.4C9.6 4.3 8.6 3.7 7.2 3.7C5.6 3.7 4.6 4.6 4.6 5.8C4.6 7.1 5.8 7.7 7.3 8.1C8.9 8.5 10 9.2 10 10.6C10 11.9 8.8 12.8 7.2 12.8C5.7 12.8 4.6 12.1 4.3 11" fill="none" stroke="#eee" stroke-width="1.4"/>
<rect x="3.6" y="15.9" width="13.7" height="1.8" rx="0.5" fill="#eee"/><rect x="3.6" y="20.5" width="5.7" height="1.8" rx="0.5" fill="#eee"/></svg>
<svg style="left:16.6px;top:554.5px" width="29.4" height="29" viewBox="0 0 29.4 29">
<path fill="#6e6e6e" d="M0 8.2L14 15.2V29L0 22z"/><path fill="#6e6e6e" d="M15.4 15.2L29.4 8.2V22L15.4 29z"/>
<path fill="#6e6e6e" d="M0.8 6.5L8.3 2.7L22.3 9.8L14.7 13.6z"/><path fill="#6e6e6e" d="M10 1.8L13.8 0L28.6 6.6L24 8.9z"/>
<path fill="#eee" d="M20.8 10.6L23.8 9.2V14.5L22.3 13.8L20.8 14.5z"/><path fill="#6e6e6e" d="M21.4 10.9L23.2 10V12.9L21.4 12.9z"/></svg>
<svg style="left:0;top:0" width="66" height="700" viewBox="0 0 66 700"><path d="M44.80 623.27 L45.01 621.80 L45.03 620.41 L44.88 619.11 L44.55 617.91 L44.05 616.84 L43.38 615.91 L42.55 615.12 L41.58 614.50 L40.47 614.04 L39.25 613.76 L37.92 613.65 L36.50 613.73 L35.02 613.98 L33.50 614.41 L31.94 615.01 L30.39 615.77 L28.84 616.69 L27.33 617.74 L25.88 618.91 L24.50 620.20 L23.21 621.58 L22.04 623.03 L20.99 624.54 L20.07 626.09 L19.31 627.64 L18.71 629.20 L18.28 630.72 L18.03 632.20 L17.95 633.62 L18.06 634.95 L18.34 636.17 L18.80 637.28 L19.42 638.25 L20.21 639.08 L21.14 639.75 L22.21 640.25 L23.41 640.58 L24.71 640.73 L26.10 640.71 L27.57 640.50 M35.49 617.60 L36.64 618.51 L37.76 619.49 L38.82 620.53 L39.82 621.62 L40.76 622.76 L41.62 623.94 L42.39 625.15 L43.08 626.37 L43.67 627.60 L44.16 628.82 L44.54 630.04 L44.82 631.22 L44.99 632.38 L45.05 633.49 L44.99 634.55 L44.83 635.55 L44.55 636.49 L44.17 637.34 L43.68 638.11 L43.10 638.80 L42.41 639.38 L41.64 639.87 L40.79 640.25 L39.85 640.53 L38.85 640.69 L37.79 640.75 L36.68 640.69 L35.52 640.52 L34.34 640.24 L33.12 639.86 L31.90 639.37 L30.67 638.78 L29.45 638.09 L28.24 637.32 L27.06 636.46 L25.92 635.52 L24.83 634.52 L23.79 633.46 L22.81 632.34 L21.90 631.19 M18.37 624.04 L18.25 623.52 L18.15 623.01 L18.07 622.50 L18.01 622.00 L17.97 621.51 L17.96 621.03 L17.96 620.55 L17.99 620.09 L18.03 619.64 L18.10 619.20 L18.19 618.77 L18.30 618.36 L18.43 617.96 L18.58 617.57 L18.76 617.20 L18.95 616.85 L19.16 616.51 L19.39 616.19 L19.64 615.88 L19.91 615.60 L20.20 615.33 L20.50 615.08 L20.82 614.85 L21.16 614.64 L21.52 614.45 L21.89 614.28 L22.27 614.13 L22.68 614.00 L23.09 613.89 L23.52 613.80 L23.96 613.73 L24.41 613.68 L24.87 613.66 L25.35 613.66 L25.83 613.67 L26.32 613.71 L26.82 613.77 L27.33 613.85 L27.84 613.96 L28.36 614.08" fill="none" stroke="#6e6e6e" stroke-width="3.0"/><path d="M34.10 634.40 L38.80 629.70 A3.3 3.3 0 0 1 34.10 634.40z" fill="#6e6e6e"/></svg>
<svg style="left:16.8px;top:670px" width="29.4" height="29" viewBox="0 0 29.4 29">
<path fill="#6e6e6e" d="M0 8.2L14 15.2V29L0 22z"/><path fill="#6e6e6e" d="M15.4 15.2L29.4 8.2V22L15.4 29z"/>
<path fill="#6e6e6e" d="M0.8 6.5L8.3 2.7L22.3 9.8L14.7 13.6z"/><path fill="#6e6e6e" d="M10 1.8L13.8 0L28.6 6.6L24 8.9z"/>
<path fill="#eee" d="M20.8 10.6L23.8 9.2V14.5L22.3 13.8L20.8 14.5z"/><path fill="#6e6e6e" d="M21.4 10.9L23.2 10V12.9L21.4 12.9z"/></svg>
<div class="a" style="left:0.00px;top:922.50px;width:65.00px;height:1.50px;background:#dcdcdc;"></div>
<div class="a" style="left:0.00px;top:981.50px;width:65.00px;height:1.50px;background:#dcdcdc;"></div>
<div class="a" style="left:0.00px;top:1098.50px;width:65.00px;height:1.50px;background:#dcdcdc;"></div>
<svg style="left:12px;top:930px" width="40" height="160" viewBox="12 930 40 160">
<path fill="#6e6e6e" fill-rule="evenodd" d="M28.68 941.80L28.92 938.80L33.68 938.80L33.92 941.80L37.44 943.26L39.73 941.30L43.10 944.67L41.14 946.96L42.60 950.48L45.60 950.72L45.60 955.48L42.60 955.72L41.14 959.24L43.10 961.53L39.73 964.90L37.44 962.94L33.92 964.40L33.68 967.40L28.92 967.40L28.68 964.40L25.16 962.94L22.87 964.90L19.50 961.53L21.46 959.24L20.00 955.72L17.00 955.48L17.00 950.72L20.00 950.48L21.46 946.96L19.50 944.67L22.87 941.30L25.16 943.26z M31.3 947.5a5.6 5.6 0 1 0 0.001 0z"/>
<path d="M21.35 1010V1009A10.05 10.05 0 0 1 41.45 1009V1010" fill="none" stroke="#6e6e6e" stroke-width="2.6"/>
<path fill="#6e6e6e" d="M25.1 1006.6V1019H23.5A5.3 6.2 0 0 1 23.5 1006.6z"/>
<path fill="#6e6e6e" d="M37.7 1006.6V1019H39.3A5.3 6.2 0 0 0 39.3 1006.6z"/>
<path d="M41.5 1018V1020.6Q41.5 1024.2 37.9 1024.2H34" fill="none" stroke="#6e6e6e" stroke-width="2"/>
<rect x="30.6" y="1022.4" width="6.2" height="3.6" rx="1.8" fill="#6e6e6e"/>
</svg>
<svg style="left:19px;top:1055px" width="25" height="29" viewBox="0 0 25 29" fill="#6e6e6e">
<circle cx="12.5" cy="6.8" r="6.8"/><path d="M0 29V25.5C0 19.5 5.5 15.5 12.5 15.5S25 19.5 25 25.5V29z"/></svg>
<div class="t" style="left:7.08px;top:1124.22px;font-size:16.5px;color:#222;transform:scaleX(0.9610);">9.0....</div>
<div class="a" style="left:66.00px;top:0.00px;width:2238.00px;height:54.00px;background:#2389b0;"></div>
<div class="t" style="left:104.04px;top:20.78px;font-size:18.8px;color:#fff;-webkit-text-stroke:0.5px #fff;transform:scaleX(0.9040);">DASHBOARD</div>
<div class="t" style="left:1747.97px;top:21.42px;font-size:17.8px;color:#fff;transform:scaleX(0.8866);">PENDING DOCUMENTS:</div>
<div class="a" style="left:1941.2px;top:7.3px;width:43.6px;height:39.2px;background:#fff;border-radius:4px"></div>
<div class="t" style="left:1947.55px;top:13.85px;font-size:26.5px;color:#2457e0;font-weight:bold;transform:scaleX(1.0509);">02</div>
<svg style="left:2032px;top:12.5px" width="24" height="30" viewBox="0 0 24 30">
<path fill="#fff" d="M4.6 0.5H19.4a2.2 2.2 0 0 1 2.2 2.2V27.2H2.4V2.7A2.2 2.2 0 0 1 4.6 0.5z"/>
<rect x="0" y="26.9" width="23.8" height="2.7" rx="1.2" fill="#fff"/>
<g fill="#2389b0"><rect x="6.8" y="5.6" width="3.2" height="1.8" rx="0.9"/><rect x="13.8" y="5.6" width="3.2" height="1.8" rx="0.9"/>
<rect x="6.8" y="10.9" width="3.2" height="1.8" rx="0.9"/><rect x="13.8" y="10.9" width="3.2" height="1.8" rx="0.9"/>
<rect x="6.8" y="16.2" width="3.2" height="1.8" rx="0.9"/><rect x="13.8" y="16.2" width="3.2" height="1.8" rx="0.9"/>
<path d="M9.9 27.3V23.9a2.05 2.05 0 0 1 4.1 0V27.3z"/></g></svg>
<div class="t" style="left:2077.16px;top:18.72px;font-size:17.8px;color:#fff;transform:scaleX(0.9610);">DocBits</div>
<svg style="left:2177px;top:12.2px" width="26.4" height="26.4" viewBox="0 0 26.4 26.4">
<circle cx="13.2" cy="13.2" r="13.2" fill="#fff"/><circle cx="13.4" cy="8.1" r="1.35" fill="#1f7499"/><rect x="12.0" y="11.9" width="2.9" height="7.9" fill="#1f7499"/></svg>
<svg style="left:2246.2px;top:12.2px" width="26.4" height="26.4" viewBox="0 0 26.4 26.4">
<circle cx="13.2" cy="13.2" r="13.2" fill="#fff"/>
<path d="M8.9 9.3C8.9 6.5 10.8 4.9 13.2 4.9S17.6 6.6 17.6 9.2C17.6 11.8 13.3 13 13.3 16.9" fill="none" stroke="#1f7499" stroke-width="2.5"/>
<circle cx="13.2" cy="20.7" r="1.45" fill="#1f7499"/></svg>
<div class="a" style="left:95.3px;top:78.3px;width:541.5px;height:47.6px;background:#fff;border:1.5px solid #cfcfcf;border-radius:5px"></div>
<div class="t" style="left:108.77px;top:93.71px;font-size:17.7px;color:#6b6b6b;transform:scaleX(0.9505);">Search by name or Id...</div>
<svg style="left:585px;top:86px" width="32" height="32" viewBox="0 0 32 32" fill="none" stroke="#606060" stroke-width="1.8" stroke-linecap="round">
<path d="M7.5 9.7H15.7M19.9 7.8V11.5M20.4 9.7H24M7.5 15.9H10.4M11.4 14.2V17.9M15.8 15.9H24M7.5 22.1H11.5M15.7 20.2V24M16 22.1H24"/></svg>
<div class="a" style="left:656.3px;top:78.4px;width:470.5px;height:47.4px;background:#fff;border:1.5px solid #cfcfcf;border-radius:4px"></div>
<div class="a" style="left:951.00px;top:79.50px;width:68.00px;height:45.50px;background:#2389b0;"></div>
<div class="t" style="left:676.23px;top:93.33px;font-size:18.5px;color:#5e5e5e;-webkit-text-stroke:0.5px #5e5e5e;transform:scaleX(0.8988);">30D</div>
<div class="t" style="left:744.91px;top:93.33px;font-size:18.5px;color:#5e5e5e;-webkit-text-stroke:0.5px #5e5e5e;transform:scaleX(0.9085);">90D</div>
<div class="t" style="left:813.45px;top:93.33px;font-size:18.5px;color:#5e5e5e;-webkit-text-stroke:0.5px #5e5e5e;transform:scaleX(0.9119);">180D</div>
<div class="t" style="left:891.72px;top:93.33px;font-size:18.5px;color:#5e5e5e;-webkit-text-stroke:0.5px #5e5e5e;transform:scaleX(0.9056);">365D</div>
<div class="t" style="left:1038.13px;top:93.33px;font-size:18.5px;color:#5e5e5e;-webkit-text-stroke:0.5px #5e5e5e;transform:scaleX(0.8801);">CUSTOM</div>
<div class="t" style="left:970.50px;top:93.33px;font-size:18.5px;color:#fff;-webkit-text-stroke:0.5px #fff;transform:scaleX(0.9147);">ALL</div>
<div class="a" style="left:1814.9px;top:78.1px;width:48.2px;height:48px;background:#2389b0;border-radius:9px"></div>
<div class="a" style="left:1873px;top:78.1px;width:48.2px;height:48px;background:#2389b0;border-radius:9px"></div>
<div class="a" style="left:1931px;top:78.1px;width:48.2px;height:48px;background:#2389b0;border-radius:9px"></div>
<div class="a" style="left:1988.8px;top:78.1px;width:48.2px;height:48px;background:#2389b0;border-radius:9px"></div>
<div class="a" style="left:2046.5px;top:78.1px;width:48.2px;height:48px;background:#2389b0;border-radius:9px"></div>
<div class="a" style="left:2104px;top:78.1px;width:48.2px;height:48px;background:#2389b0;border-radius:9px"></div>
<div class="a" style="left:2162px;top:78.1px;width:117.8px;height:48px;background:#2389b0;border-radius:9px"></div>
<svg style="left:1839.5px;top:102px" width="1" height="1" viewBox="0 0 1 1" fill="none" stroke="#fff" stroke-width="3.6" stroke-linecap="round" stroke-linejoin="round">
<path d="M-4.4 -7.15A8.4 8.4 0 0 0 -2.4 8.05"/><path d="M-10.8 -8.75H-3.7V-2.0"/>
<path d="M4.4 7.15A8.4 8.4 0 0 0 2.4 -8.05"/><path d="M10.8 8.75H3.7V2.0"/></svg>
<svg style="left:1884.9px;top:89.5px" width="25" height="25" viewBox="0 0 25 25"><path fill="#fff" fill-rule="evenodd" d="M10.02 2.50L10.25 0.20L14.75 0.20L14.98 2.50L17.81 3.68L19.61 2.22L22.78 5.39L21.32 7.19L22.50 10.02L24.80 10.25L24.80 14.75L22.50 14.98L21.32 17.81L22.78 19.61L19.61 22.78L17.81 21.32L14.98 22.50L14.75 24.80L10.25 24.80L10.02 22.50L7.19 21.32L5.39 22.78L2.22 19.61L3.68 17.81L2.50 14.98L0.20 14.75L0.20 10.25L2.50 10.02L3.68 7.19L2.22 5.39L5.39 2.22L7.19 3.68z M12.5 8.1a4.4 4.4 0 1 0 0.001 0z"/></svg>
<svg style="left:1943px;top:90.5px" width="25" height="24" viewBox="0 0 25 24">
<rect x="1.7" y="0" width="20.5" height="10" rx="1.2" fill="#fff"/><rect x="0" y="11" width="25" height="2" rx="1" fill="#fff"/>
<path d="M2.7 14.5V22.2H21.2V14.5" fill="none" stroke="#fff" stroke-width="2"/></svg>
<svg style="left:2000px;top:89.8px" width="26" height="25" viewBox="0 0 26 25" fill="#fff">
<rect x="0" y="14.2" width="7.6" height="10.5" rx="0.6"/><rect x="9.1" y="0" width="7.5" height="24.7" rx="0.6"/><rect x="18.1" y="7" width="7.2" height="17.7" rx="0.6"/></svg>
<svg style="left:2058.7px;top:89.1px" width="24" height="26" viewBox="0 0 24 26">
<path fill="#fff" d="M0 10.2L6 6.6L12 13.5L18 6.6L23.8 10.2V25.5H0z"/>
<path d="M0.7 25L9 17.2M23 25L14.8 17.2" stroke="#2389b0" stroke-width="1.3" fill="none"/>
<path d="M1 10.7L12 20.6L23 10.7" stroke="#2389b0" stroke-width="1.3" fill="none"/>
<path fill="#fff" d="M10.2 0H13.9V8H17.6L12.05 14L6.5 8H10.2z"/>
<path d="M6 8.6L12.05 15.2L18.1 8.6" stroke="#2389b0" stroke-width="1.2" fill="none"/></svg>
<svg style="left:2116px;top:90.7px" width="25.2" height="22.5" viewBox="0 0 25.2 22.5">
<rect x="3.8" y="0" width="17.3" height="2.2" rx="1.1" fill="#fff"/>
<rect x="0" y="3.8" width="25.2" height="18.7" rx="2.8" fill="#fff"/>
<path d="M12.6 19.5V9.2M8.6 12.8L12.6 8.8L16.6 12.8" stroke="#2389b0" stroke-width="1.6" fill="none"/></svg>
<svg style="left:2181px;top:92.9px" width="23" height="20" viewBox="0 0 23 20" fill="#fff">
<path d="M11.5 0L17.4 8H14.2V13.6H8.8V8H5.6z"/><rect x="0" y="15.7" width="22.8" height="3.8" rx="1.9"/></svg>
<div class="t" style="left:2207.24px;top:94.25px;font-size:18.6px;color:#fff;font-weight:bold;transform:scaleX(0.8576);">Upload</div>
<div class="a" style="left:94.8px;top:136.2px;width:541.9px;height:336.6px;background:#fff;border-radius:6px;box-shadow:0 2px 6px rgba(0,0,0,0.22)"></div>
<div class="t" style="left:113.96px;top:180.81px;font-size:17.7px;color:#222;transform:scaleX(0.9637);">Status</div>
<div class="t" style="left:114.80px;top:239.01px;font-size:17.7px;color:#222;transform:scaleX(0.9569);">Assigned To</div>
<div class="t" style="left:114.80px;top:297.01px;font-size:17.7px;color:#222;transform:scaleX(0.9388);">Assigned To Group</div>
<div class="t" style="left:113.39px;top:354.41px;font-size:17.7px;color:#222;transform:scaleX(0.9414);">Restart Required</div>
<div class="a" style="left:335.2px;top:165.3px;width:272.6px;height:46.8px;background:#fff;border:2px solid #cbcbcb;border-radius:5px"></div>
<div class="t" style="left:348.23px;top:179.81px;font-size:17.7px;color:#666;transform:scaleX(0.9903);">Status</div>
<svg style="left:573px;top:186.2px" width="12.5" height="6.3" viewBox="0 0 13 6.5"><path fill="#6a6a6a" d="M0 0H13L6.5 6.5z"/></svg>
<div class="a" style="left:335.2px;top:223px;width:272.6px;height:47.4px;background:#fff;border:2px solid #cbcbcb;border-radius:5px"></div>
<div class="t" style="left:349.10px;top:237.51px;font-size:17.7px;color:#666;transform:scaleX(0.9799);">Assigned To</div>
<svg style="left:573px;top:244.2px" width="12.5" height="6.3" viewBox="0 0 13 6.5"><path fill="#6a6a6a" d="M0 0H13L6.5 6.5z"/></svg>
<div class="a" style="left:335.2px;top:281px;width:272.6px;height:47.1px;background:#fff;border:2px solid #cbcbcb;border-radius:5px"></div>
<div class="t" style="left:349.10px;top:295.21px;font-size:17.7px;color:#666;transform:scaleX(0.9615);">Assigned To Group</div>
<svg style="left:573px;top:302.1px" width="12.5" height="6.3" viewBox="0 0 13 6.5"><path fill="#6a6a6a" d="M0 0H13L6.5 6.5z"/></svg>
<div class="a" style="left:335.8px;top:352.9px;width:21.8px;height:21.4px;border:1.6px solid #6e6e6e;border-radius:3px;background:#fff"></div>
<div class="t" style="left:406.89px;top:421.98px;font-size:18.2px;color:#c61a1a;-webkit-text-stroke:0.55px #c61a1a;transform:scaleX(0.9290);">Clear Filters</div>
<div class="a" style="left:527px;top:410px;width:80.7px;height:42.6px;background:#2389b0;border-radius:8px"></div>
<div class="t" style="left:546.70px;top:421.98px;font-size:18.2px;color:#fff;-webkit-text-stroke:0.65px #fff;transform:scaleX(0.9118);">Apply</div>
<svg style="left:0;top:0" width="700" height="140" viewBox="0 0 700 140"><path fill="#00ffff" d="M423.3 98H536.2V79.8L580.1 102.4L536.2 124.3V106.9H423.3z"/></svg>
</body></html>
